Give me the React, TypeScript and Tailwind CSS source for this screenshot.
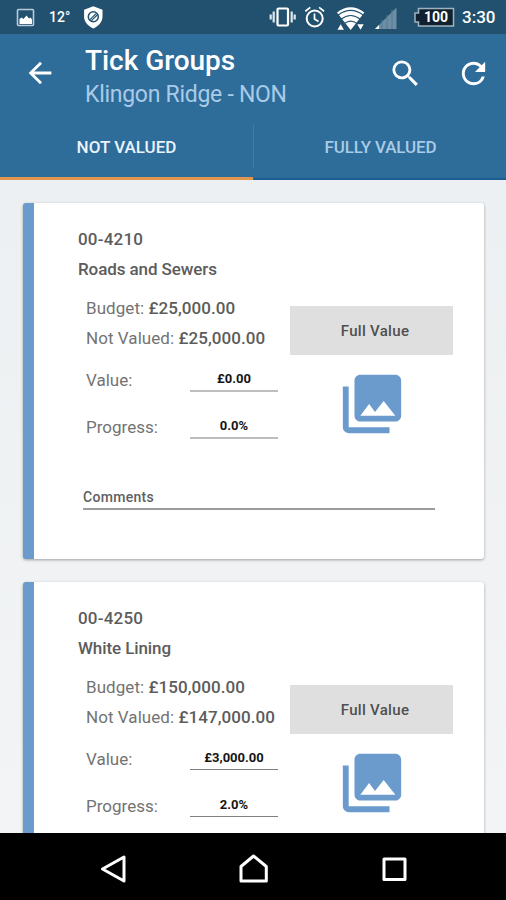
import { MdArrowBack, MdPhotoLibrary, MdRefresh, MdSearch } from "react-icons/md";

type Group = {
  code: string;
  name: string;
  budget: string;
  notValued: string;
  value: string;
  progress: string;
  edited: boolean;
  commentsLabel?: string;
};

const GROUPS: Group[] = [
  {
    code: "00-4210",
    name: "Roads and Sewers",
    budget: "£25,000.00",
    notValued: "£25,000.00",
    value: "£0.00",
    progress: "0.0%",
    edited: false,
    commentsLabel: "Comments",
  },
  {
    code: "00-4250",
    name: "White Lining",
    budget: "£150,000.00",
    notValued: "£147,000.00",
    value: "£3,000.00",
    progress: "2.0%",
    edited: true,
  },
];

function StatusBar() {
  return (
    <div className="flex h-[34px] shrink-0 items-center bg-[#22516f] text-white">
      <svg className="ml-4 h-[34px] w-[19px]" viewBox="16 0 19 34" fill="none">
        <rect x="17.5" y="9.5" width="16" height="16" rx="1" stroke="#b9cbd8" strokeWidth="1.6" />
        <path d="M19.5 24v-5l2-1.5 2 1.5 3-3.5 2.5 3 1.5-1 1.500 2V24z" fill="#fff" />
      </svg>
      <span className="ml-[14px] w-[34px] text-[14px] font-medium leading-[34px]">12°</span>
      <svg className="h-[34px] w-[20px]" viewBox="83 0 20 34" fill="none">
        <path d="M93.300 6.300l9.200 3.500v6.700c0 5.500-3.700 9.500-9.200 11.900-5.500-2.400-9.200-6.400-9.200-11.900V9.800z" fill="#fff" />
        <circle cx="93.300" cy="16.700" r="5" stroke="#22516f" strokeWidth="1.500" />
        <path d="M90 19.600l6-6M91.300 20.800l5.800-5.800" stroke="#22516f" strokeWidth="1.200" />
      </svg>
      <svg className="ml-auto h-[34px] w-[132px]" viewBox="267 0 132 34" fill="none">
        {/* vibrate */}
        <rect x="277.500" y="8.500" width="10.500" height="17" rx="1" stroke="#fff" strokeWidth="2.200" />
        <path d="M273.700 11.500v11M270.700 14.500v5M291.700 11.500v11M294.700 14.500v5" stroke="#dce8f0" strokeWidth="2.200" />
        {/* alarm */}
        <circle cx="314.700" cy="18.500" r="8" stroke="#fff" strokeWidth="2" />
        <path d="M314.500 13.500v5.500l4 2.500M305.300 11.200l5-3.800M324.100 11.200l-5-3.800" stroke="#fff" strokeWidth="1.700" />
        {/* wifi */}
        <path d="M337 12.500q13.700-10.500 27.400 0L350.700 30z" fill="#fff" />
        <path d="M338 15.200q12.700-9.500 25.400 0M341 19.300q9.700-7.600 19.400 0M344.300 23.600q6.400-5 12.800 0" stroke="#22516f" strokeWidth="1.200" />
        <path d="M337.500 29.800l3.200-5.500 3.200 5.500zM357.300 24.300h6.400l-3.200 5.500z" fill="#fff" />
        {/* signal */}
        <path d="M375 29L396.500 7.500V29z" fill="#6d8ea5" />
        <path d="M382 20v9M387 15v14M392 10v19" stroke="#557b95" strokeWidth="1" />
        <path d="M375 29l4-4v4z" fill="#fff" />
      </svg>
      <svg className="ml-[14px] h-[34px] w-[42px]" viewBox="413 0 42 34">
        <path d="M418.500 8.500H453.500v17.500H418.500v-4h-3.500v-9h3.500z" fill="#10202f" stroke="#9fb2bf" strokeWidth="1.500" />
        <text x="436" y="22.300" textAnchor="middle" fill="#fff" fontFamily="Roboto, sans-serif" fontSize="14" fontWeight="700" textLength="24">
          100
        </text>
      </svg>
      <span className="ml-[7px] w-[44px] text-[17px] font-medium leading-[34px]">3:30</span>
    </div>
  );
}

function Header() {
  return (
    <header className="flex h-[146px] shrink-0 flex-col bg-[#2e6c99]">
      <div className="flex h-[82px] pt-[11px]">
        <MdArrowBack className="ml-[23px] mt-[11px] size-[34px] text-white" />
        <div className="ml-[28px] flex-1 whitespace-nowrap">
          <h1 className="text-[28px] font-medium leading-[32px] tracking-[-0.05px] text-white">Tick Groups</h1>
          <p className="text-[23px] leading-[36px] tracking-[-0.28px] text-[#a9cbe6]">Klingon Ridge - NON</p>
        </div>
        <MdSearch className="mt-[11px] size-[35px] text-white" />
        <MdRefresh className="ml-[33px] mr-[15px] mt-[11px] size-[35px] text-white" />
      </div>
      <div className="flex h-16 text-[17px] font-medium leading-[62px]">
        <div className="w-[253px] border-b-[3px] border-[#e2954c] text-center text-[#eaf4fd]">NOT VALUED</div>
        <div className="mt-2 h-[45px] w-px bg-[#3e7ba8]" />
        <div className="flex-1 border-b-2 border-[#1b5e93] pl-px text-center tracking-[-0.15px] text-[#a9cbe6]">
          FULLY VALUED
        </div>
      </div>
    </header>
  );
}

function Field({ label, value, edited }: { label: string; value: string; edited: boolean }) {
  return (
    <div className="flex h-[47px] items-center">
      <span className="w-[104px]">{label}</span>
      <span
        className={`w-[88px] text-center text-[13px] font-bold leading-[22px] text-[#151515] ${
          edited ? "h-[23px] border-b border-[#808080]" : "h-6 border-b-2 border-[#bdbdbd]"
        }`}
      >
        {value}
      </span>
    </div>
  );
}

function GroupCard({ group }: { group: Group }) {
  return (
    <section className="h-[356px] shrink-0 rounded-[3px] border-l-[11px] border-[#6b9bcd] bg-white pl-11 pt-[21px] shadow-[0_1px_3px_rgba(0,0,0,0.35)]">
      <div className="text-[17px] font-medium leading-[30px] text-[#5c5c5c]">
        <p className="tracking-[0.2px]">{group.code}</p>
        <p className="tracking-[-0.1px]">{group.name}</p>
      </div>
      <div className="mt-[9px] flex whitespace-nowrap pl-2 text-[17px] text-[#737373]">
        <div className="w-[204px] leading-[30px]">
          <p className="tracking-[0.06px]">
            Budget: <b className="font-medium text-[#5c5c5c]">{group.budget}</b>
          </p>
          <p className="tracking-[0.06px]">
            Not Valued: <b className="font-medium text-[#5c5c5c]">{group.notValued}</b>
          </p>
          <div className="pt-[3px]">
            <Field label="Value:" value={group.value} edited={group.edited} />
            <Field label="Progress:" value={group.progress} edited={group.edited} />
          </div>
        </div>
        <div className="flex w-[163px] flex-col items-center pt-[13px]">
          <button className="h-[49px] w-full bg-[#dfdfdf] pl-[7px] pt-[2px] text-[15px] font-medium tracking-[0.3px] text-[#4f4f4f]">
            Full Value
          </button>
          <MdPhotoLibrary className="mt-[14px] size-[70px] text-[#6b9bcd]" />
        </div>
      </div>
      <div className="ml-[5px] mt-[35px] h-[25px] w-[352px] border-b-2 border-[#9c9c9c] text-[14px] font-medium leading-6 tracking-[0.3px] text-[#606060]">
        {group.commentsLabel}
      </div>
    </section>
  );
}

function NavBar() {
  return (
    <nav className="h-[67px] shrink-0 bg-black">
      <svg className="h-[67px] w-[506px]" viewBox="0 833 506 67" fill="none" stroke="#fff" strokeWidth="3" strokeLinejoin="round">
        <path d="M102.500 869l21.500-12v24z" />
        <path d="M241 881v-14.500l12.500-10.500 12.800 10.500V881z" />
        <rect x="384" y="859" width="21" height="20.500" />
      </svg>
    </nav>
  );
}

export default function App() {
  return (
    <div className="flex h-[900px] w-[506px] flex-col overflow-hidden font-[Roboto,sans-serif]">
      <StatusBar />
      <Header />
      <main className="flex min-h-0 flex-1 flex-col gap-[23px] overflow-hidden bg-linear-to-b from-[#edf0f2] to-[#f2f4f5] pl-[23px] pr-[22px] pt-[23px]">
        {GROUPS.map((group) => (
          <GroupCard key={group.code} group={group} />
        ))}
      </main>
      <NavBar />
    </div>
  );
}
